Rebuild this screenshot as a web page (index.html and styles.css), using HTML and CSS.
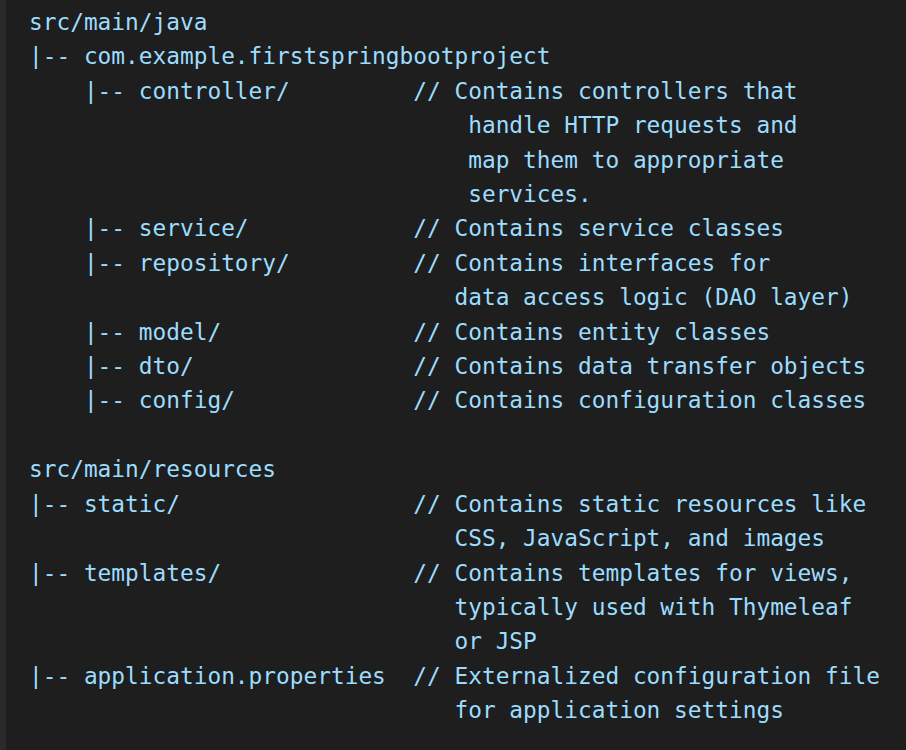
FILE: index.html
```html
<!DOCTYPE html>
<html lang="en">
<head>
<meta charset="utf-8">
<title>Spring Boot project structure</title>
<link rel="stylesheet" href="styles.css">
</head>
<body>
<main class="editor">
<pre class="code">src/main/java
|-- com.example.firstspringbootproject
    |-- controller/         // Contains controllers that
                                handle HTTP requests and
                                map them to appropriate
                                services.
    |-- service/            // Contains service classes
    |-- repository/         // Contains interfaces for
                               data access logic (DAO layer)
    |-- model/              // Contains entity classes
    |-- dto/                // Contains data transfer objects
    |-- config/             // Contains configuration classes

src/main/resources
|-- static/                 // Contains static resources like
                               CSS, JavaScript, and images
|-- templates/              // Contains templates for views,
                               typically used with Thymeleaf
                               or JSP
|-- application.properties  // Externalized configuration file
                               for application settings</pre>
</main>
</body>
</html>
```
FILE: styles.css
```css
html, body {
  margin: 0;
  padding: 0;
  background: #1e1e1e;
}
.editor {
  box-sizing: border-box;
  width: 906px;
  height: 750px;
  overflow: hidden;
  background: #1e1e1e;
  border-left: 6px solid #2a2a2a;
}
.code {
  margin: 0;
  padding: 5px 0 0 23px;
  font-family: "DejaVu Sans Mono", "Liberation Mono", monospace;
  font-size: 22.8px;
  line-height: 34.4px;
  color: #9cdcfe;
  white-space: pre;
}
```
